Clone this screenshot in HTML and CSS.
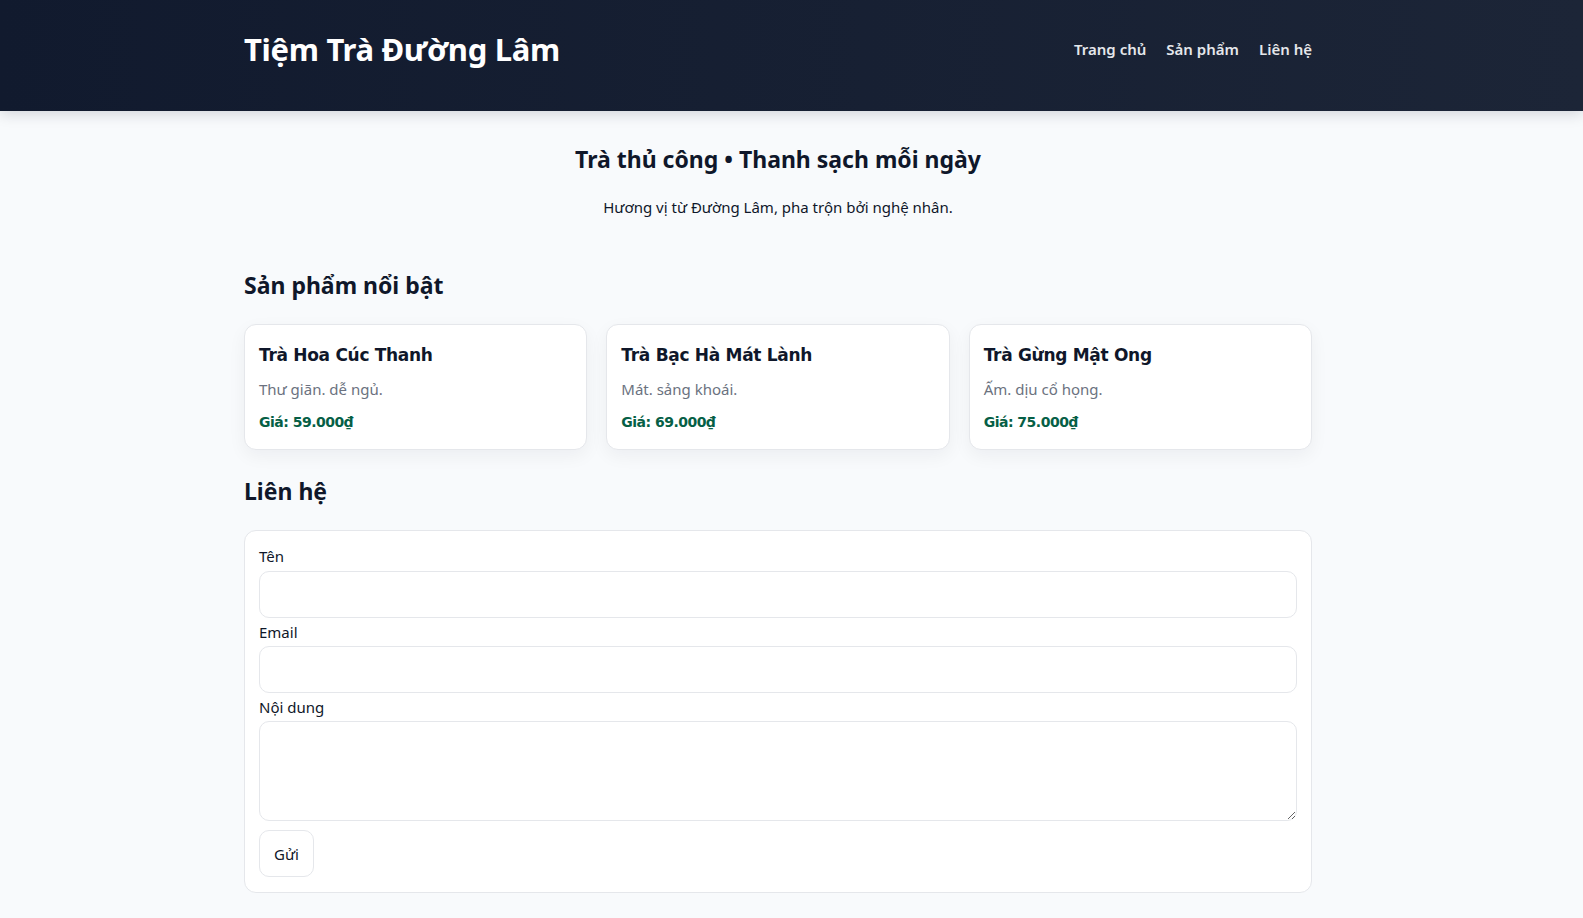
FILE: index.html
```html
<!DOCTYPE html>
<html lang="vi">
<head>
<meta charset="utf-8">
<title>Tiệm Trà Đường Lâm</title>
<link rel="stylesheet" href="styles.css">
</head>
<body>
<div class="page">
  <header class="site-header">
    <div class="container header-inner">
      <div class="logo">Tiệm Trà Đường Lâm</div>
      <nav class="nav">
        <a href="#">Trang chủ</a>
        <a href="#">Sản phẩm</a>
        <a href="#">Liên hệ</a>
      </nav>
    </div>
  </header>

  <main class="container">
    <section class="hero">
      <h1>Trà thủ công • Thanh sạch mỗi ngày</h1>
      <p>Hương vị từ Đường Lâm, pha trộn bởi nghệ nhân.</p>
    </section>

    <section class="products">
      <h2>Sản phẩm nổi bật</h2>
      <div class="grid">
        <div class="card">
          <h3>Trà Hoa Cúc Thanh</h3>
          <p class="desc">Thư giãn. dễ ngủ.</p>
          <p class="price">Giá: 59.000₫</p>
        </div>
        <div class="card">
          <h3>Trà Bạc Hà Mát Lành</h3>
          <p class="desc">Mát. sảng khoái.</p>
          <p class="price">Giá: 69.000₫</p>
        </div>
        <div class="card">
          <h3>Trà Gừng Mật Ong</h3>
          <p class="desc">Ấm. dịu cổ họng.</p>
          <p class="price">Giá: 75.000₫</p>
        </div>
      </div>
    </section>

    <section class="contact">
      <h2>Liên hệ</h2>
      <form class="form">
        <label>Tên</label>
        <input type="text">
        <label>Email</label>
        <input type="email">
        <label>Nội dung</label>
        <textarea></textarea>
        <div><button type="button">Gửi</button></div>
      </form>
    </section>
  </main>
</div>
</body>
</html>
```

FILE: styles.css
```css
* { box-sizing: border-box; }
html, body { margin: 0; padding: 0; }
body {
  background: #f8fafc;
  color: #0f172a;
  font-family: "Noto Sans", "Open Sans", sans-serif;
  font-size: 15px;
}
.page { padding-right: 27px; }
.site-header {
  background: linear-gradient(90deg, #111a2e 0%, #1c2537 100%);
  margin-right: -27px;
  padding-right: 27px;
  box-shadow: 0 2px 14px rgba(15, 23, 42, 0.18);
  position: relative;
}
.container {
  max-width: 1100px;
  margin: 0 auto;
  padding: 0 16px;
}
.header-inner {
  height: 111px;
  display: flex;
  align-items: center;
  justify-content: space-between;
}
.logo {
  color: #fff;
  font-size: 31px;
  font-weight: 700;
  letter-spacing: -0.3px;
  margin-top: -14px;
}
.nav { display: flex; gap: 20px; margin-top: -14px; }
.nav a {
  color: #e5e7eb;
  text-decoration: none;
  font-size: 15px;
  font-weight: 600;
}
.hero { text-align: center; padding-top: 32px; }
.hero h1 {
  margin: 0;
  font-size: 23px;
  font-weight: 700;
  line-height: 32px;
}
.hero p { margin: 21px 0 0; font-size: 15px; line-height: 22px; }
.products { margin-top: 51px; }
h2 {
  margin: 0;
  font-size: 23px;
  font-weight: 700;
  line-height: 32px;
}
.grid {
  margin-top: 23px;
  display: grid;
  grid-template-columns: repeat(3, 1fr);
  gap: 19px;
}
.card {
  background: #fff;
  border: 1px solid #e5e7eb;
  border-radius: 12px;
  padding: 14px 14px 12px;
  box-shadow: 0 6px 18px rgba(15, 23, 42, 0.05);
  height: 126px;
}
.card h3 {
  margin: 3px 0 0;
  font-family: "DejaVu Sans", sans-serif;
  font-size: 17px;
  font-weight: 700;
  line-height: 26px;
  letter-spacing: -0.3px;
}
.desc { margin: 11px 0 0; color: #6b7280; font-size: 15px; line-height: 20px; }
.price {
  margin: 13px 0 0;
  color: #065f46;
  font-family: "DejaVu Sans", sans-serif;
  font-size: 14px;
  font-weight: 700;
  line-height: 20px;
  letter-spacing: -0.5px;
}
.contact { margin-top: 25px; }
.form {
  margin-top: 23px;
  background: #fff;
  border: 1px solid #e5e7eb;
  border-radius: 12px;
  padding: 14px 14px 15px;
  display: flex;
  flex-direction: column;
}
.form label { font-size: 15px; line-height: 22px; }
.form input, .form textarea {
  display: block;
  width: 100%;
  border: 1px solid #e5e7eb;
  border-radius: 10px;
  background: #fff;
  font: inherit;
  margin: 3px 0 3px;
}
.form input { height: 47px; }
.form input:first-of-type { margin-top: 4px; }
.form textarea { height: 100px; resize: vertical; margin-bottom: 9px; }
.form button {
  height: 47px;
  padding: 0 14px;
  border: 1px solid #e5e7eb;
  border-radius: 10px;
  background: #fff;
  font: inherit;
  color: #0f172a;
}
```
